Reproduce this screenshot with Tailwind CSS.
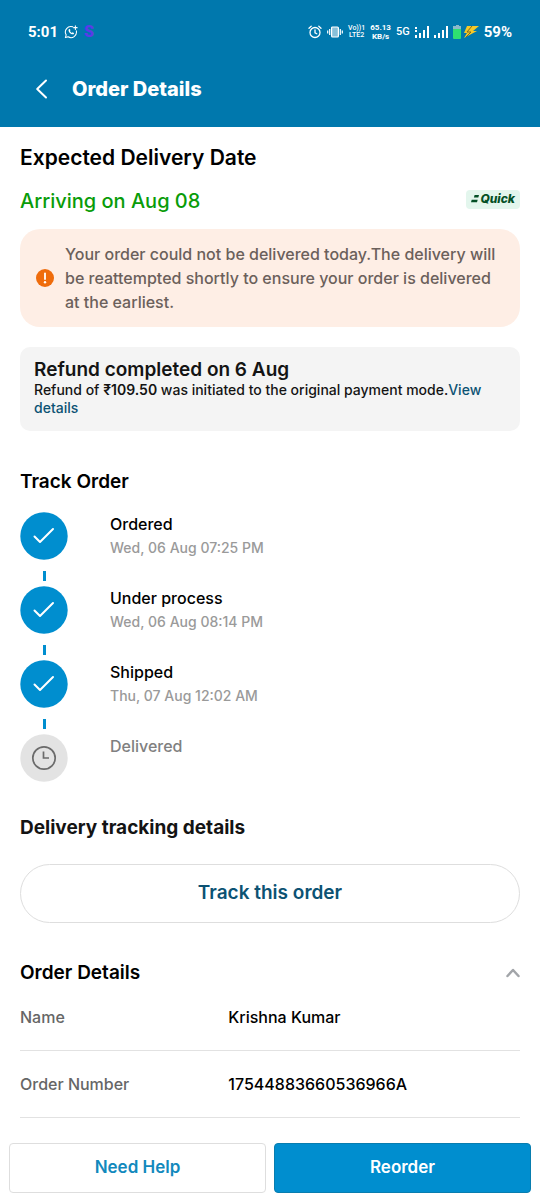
<!DOCTYPE html>
<html lang="en">
<head>
<meta charset="utf-8">
<meta name="viewport" content="width=device-width, initial-scale=1">
<title>Order Details</title>
<script src="https://cdn.jsdelivr.net/npm/@tailwindcss/browser@4"></script>
</head>
<body class="flex min-h-screen flex-col bg-white font-['Inter','Noto_Sans',sans-serif] font-medium text-black">
<header class="bg-[#0078ad] pb-[22px] text-white">
  <div class="flex h-16 items-center justify-between pr-7 pl-7 font-['Roboto',sans-serif]">
    <div class="flex items-center gap-[6px]">
      <span class="text-[15px] font-bold">5:01</span>
      <svg class="size-[14px]" viewBox="0 0 16 16" fill="none" stroke="currentColor" stroke-width="1.2" stroke-linecap="round" stroke-linejoin="round"><path d="M10 2.1A6.3 6.3 0 0 0 2.5 11.3L1.6 14.4l3.1-.9A6.3 6.3 0 0 0 14.100 6.700"/><path d="M5.700 4.800c-1.700 1.200.8 5.900 4.700 5.900 1.100-.4 1.200-1.400.9-1.700l-1.400-.7-.9.8C7.900 8.700 7.100 7.700 6.800 6.900l.6-.8-.7-1.500z" fill="currentColor" stroke="none"/><path d="M13 1v4M11 3h4"/></svg>
      <span class="text-base font-black text-[#5a3be8]">S</span>
    </div>
    <div class="flex items-center gap-[5px]">
      <svg class="size-[14px]" viewBox="0 0 14 14" fill="none" stroke="currentColor" stroke-width="1.3" stroke-linecap="round"><circle cx="7" cy="7.500" r="5"/><path d="M7 4.800v3l1.800 1M1 3.200 3.200 1.200M13 3.200 10.800 1.200"/></svg>
      <svg class="h-3 w-4" viewBox="0 0 16 12" fill="none" stroke="currentColor" stroke-width="1.200"><rect x="4.600" y="1" width="6.800" height="10" rx="1" fill="#ffffff88"/><path d="M2.700 3v6M.7 4.500v3M13.300 3v6M15.300 4.500v3"/></svg>
      <span class="text-center text-[7px] leading-[7px] font-medium">Vo))1<br>LTE2</span>
      <span class="text-center text-[8px] leading-[9px] font-bold">65.13<br>KB/s</span>
      <span class="text-[11px]">5G</span>
      <svg class="h-3 w-[14px]" viewBox="0 0 14 12" fill="currentColor"><path d="M0 1h2v2H0zM0 4h2v2H0zM0 9h2v3H0zM4 7h2v5H4zM8 4h2v8H8zM12 0h2v12h-2z"/></svg>
      <svg class="h-3 w-[14px]" viewBox="0 0 14 12" fill="currentColor"><path d="M0 9h2v3H0zM4 7h2v5H4zM8 4h2v8H8zM12 0h2v12h-2z"/></svg>
      <svg class="h-[14px] w-[26px]" viewBox="0 0 26 14"><path d="M2 1h1V0h3v1h2v4H0V1z" fill="#8bb9c9"/><path d="M0 4h8v9a1 1 0 0 1-1 1H1a1 1 0 0 1-1-1z" fill="#2fe070"/><path d="M14 1h12l-6 5h4L11 13l3-5h-3z" fill="#f5c928"/><path d="M19 1 14 7h4l-5 5" fill="none" stroke="#7a6a20" stroke-width="1"/></svg>
      <span class="text-[15px] font-bold">59%</span>
    </div>
  </div>
  <div class="flex h-[41px] items-end gap-5 pr-5 pl-8">
    <button type="button" aria-label="Back" class="flex h-8 items-center"><svg class="size-5" viewBox="0 0 20 20" fill="none" stroke="currentColor" stroke-width="2" stroke-linecap="round" stroke-linejoin="round"><path d="M14 1.500 5.200 10l8.800 8.500"/></svg></button>
    <h1 class="text-xl leading-8 font-extrabold">Order Details</h1>
  </div>
</header>

<main class="flex-1 px-5 pt-4">
  <h2 class="text-[21px] leading-[30px] font-semibold">Expected Delivery Date</h2>
  <div class="mt-3 flex items-center justify-between">
    <p class="text-xl leading-8 text-[#099c09]">Arriving on Aug 08</p>
    <span class="mb-1 flex h-[19px] items-center gap-px rounded bg-[#e3f6ed] px-[5px] text-xs font-extrabold text-[#034f25] italic"><svg class="h-2 w-2" viewBox="0 0 8 8" fill="currentColor"><path d="M3.600 0H8L7.300 2.400H2.900zM.7 4.800h6l-.7 2.400H0z"/></svg>Quick</span>
  </div>

  <section class="mt-3 flex items-center gap-[11px] rounded-[20px] bg-[#feeee5] px-4 py-[13px]">
    <svg class="size-[18px] shrink-0" viewBox="0 0 18 18"><circle cx="9" cy="9" r="9" fill="#ef6c0c"/><path d="M9 4.300v5.800" stroke="#fff" stroke-width="1.800" stroke-linecap="round"/><circle cx="9" cy="13.300" r="1.200" fill="#fff"/></svg>
    <p class="text-base leading-6 text-[#6b605b]">Your order could not be delivered today.The delivery will be reattempted shortly to ensure your order is delivered at the earliest.</p>
  </section>

  <section class="mt-5 rounded-[10px] bg-[#f4f4f4] px-[14px] pt-3 pb-[14px] text-[#141414]">
    <h3 class="text-[19px] leading-[22px] font-semibold">Refund completed on 6 Aug</h3>
    <p class="text-sm leading-[18px]">Refund of <b class="font-semibold">₹109.50</b> was initiated to the original payment mode.<a href="#" class="text-[#0c5273]">View details</a></p>
  </section>

  <h2 class="mt-[37px] text-[19px] leading-7 font-semibold">Track Order</h2>
  <ol class="mt-4">
    <li class="flex h-[74px] gap-[42px]">
      <div class="flex w-12 flex-col items-center"><svg class="size-12 shrink-0" viewBox="0 0 48 48"><circle cx="24" cy="24" r="23.700" fill="#008ecf"/><path d="m14.500 24.500 5.500 5.500L33 17" fill="none" stroke="#fff" stroke-width="2" stroke-linecap="round" stroke-linejoin="round"/></svg><span class="mt-[11px] h-[10px] w-[3px] bg-[#008ecf]"></span></div>
      <div><p class="text-base leading-6">Ordered</p><p class="text-sm leading-6 text-[#9a9a9a]">Wed, 06 Aug 07:25 PM</p></div>
    </li>
    <li class="flex h-[74px] gap-[42px]">
      <div class="flex w-12 flex-col items-center"><svg class="size-12 shrink-0" viewBox="0 0 48 48"><circle cx="24" cy="24" r="23.700" fill="#008ecf"/><path d="m14.500 24.500 5.500 5.500L33 17" fill="none" stroke="#fff" stroke-width="2" stroke-linecap="round" stroke-linejoin="round"/></svg><span class="mt-[11px] h-[10px] w-[3px] bg-[#008ecf]"></span></div>
      <div><p class="text-base leading-6">Under process</p><p class="text-sm leading-6 text-[#9a9a9a]">Wed, 06 Aug 08:14 PM</p></div>
    </li>
    <li class="flex h-[74px] gap-[42px]">
      <div class="flex w-12 flex-col items-center"><svg class="size-12 shrink-0" viewBox="0 0 48 48"><circle cx="24" cy="24" r="23.700" fill="#008ecf"/><path d="m14.500 24.500 5.500 5.500L33 17" fill="none" stroke="#fff" stroke-width="2" stroke-linecap="round" stroke-linejoin="round"/></svg><span class="mt-[11px] h-[10px] w-[3px] bg-[#008ecf]"></span></div>
      <div><p class="text-base leading-6">Shipped</p><p class="text-sm leading-6 text-[#9a9a9a]">Thu, 07 Aug 12:02 AM</p></div>
    </li>
    <li class="flex gap-[42px]">
      <svg class="size-12 shrink-0" viewBox="0 0 48 48" fill="none"><circle cx="24" cy="24" r="23.700" fill="#e3e3e3"/><circle cx="24" cy="24" r="11.200" stroke="#6b6b6b" stroke-width="1.700"/><path d="M23.500 17.500v6.500h5.500" stroke="#6b6b6b" stroke-width="1.700"/></svg>
      <p class="text-base leading-6 text-[#808080]">Delivered</p>
    </li>
  </ol>

  <h2 class="mt-[30px] text-[19px] leading-8 font-bold text-[#141414]">Delivery tracking details</h2>
  <button type="button" class="mt-5 h-[59px] w-full rounded-full border border-[#dedede] text-[19px] font-semibold text-[#0c5273]">Track this order</button>

  <div class="mt-9 flex items-center justify-between">
    <h2 class="text-[19px] leading-7 font-semibold">Order Details</h2>
    <button type="button" aria-label="Collapse order details"><svg class="h-[14px] w-[14px]" viewBox="0 0 14 14" fill="none" stroke="#a2a5a9" stroke-width="2.500" stroke-linecap="round" stroke-linejoin="round"><path d="m1.500 10 5.500-6 5.500 6"/></svg></button>
  </div>
  <dl class="text-base leading-6">
    <div class="flex border-b border-[#e2e2e2] pt-[18px] pb-[21px]"><dt class="w-5/12 text-[#666]">Name</dt><dd>Krishna Kumar</dd></div>
    <div class="flex border-b border-[#e2e2e2] pt-[21px] pb-[21px]"><dt class="w-5/12 text-[#666]">Order Number</dt><dd>17544883660536966A</dd></div>
  </dl>
</main>

<footer class="grid grid-cols-2 gap-2 px-[9px] pb-[7px]">
  <button type="button" class="h-[50px] rounded border border-[#dedede] text-[17px] font-semibold text-[#1289bd]">Need Help</button>
  <button type="button" class="h-[50px] rounded border border-[#087daf] bg-[#008ecf] text-[17px] font-semibold text-white">Reorder</button>
</footer>
</body>
</html>
